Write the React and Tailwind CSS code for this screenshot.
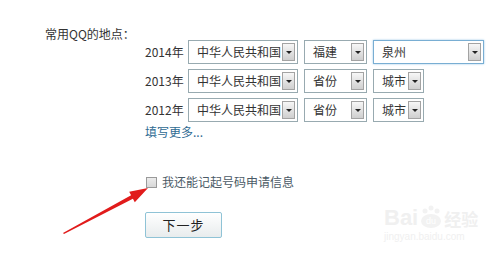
import React from 'react';

const font = { fontFamily: '"Noto Sans CJK SC", "Noto Sans", sans-serif' };

const Arrow = () => (
  <span className="absolute right-[2px] top-[2px] bottom-[2px] w-[13px] border border-[#a3a3a3] bg-gradient-to-b from-[#f7f7f7] to-[#cfcfcf] flex items-center justify-center">
    <span className="block w-0 h-0 border-l-[3px] border-r-[3px] border-t-[3px] border-l-transparent border-r-transparent border-t-[#222]" />
  </span>
);

const Select = ({ value, width, active }) => (
  <div
    className={`relative h-[24px] ${width} border ${
      active ? 'border-[#79aed3] shadow-[0_0_2px_#9cc8e6]' : 'border-[#98aab0]'
    } bg-white flex items-center pl-[8px] text-[12px] leading-[14px] text-[#333]`}
  >
    {value}
    <Arrow />
  </div>
);

const rows = [
  { year: '2014年', province: '福建', city: '泉州', wide: true },
  { year: '2013年', province: '省份', city: '城市' },
  { year: '2012年', province: '省份', city: '城市' },
];

const App = () => {
  return (
    <div className="relative w-[500px] h-[258px] bg-white overflow-hidden" style={font}>
      <div className="pt-[27px] pl-[45px] text-[12px] leading-[13px] text-[#333]">常用QQ的地点：</div>

      <div className="ml-[145px] flex flex-col gap-[5px]">
        {rows.map((r) => (
          <div key={r.year} className="flex items-center">
            <span className="w-[43px] text-[12px] leading-[14px] text-[#333]">{r.year}</span>
            <Select value="中华人民共和国" width="w-[110px]" />
            <div className="w-[6px]" />
            <Select value={r.province} width="w-[63px]" />
            <div className="w-[6px]" />
            <Select value={r.city} width={r.wide ? 'w-[111px]' : 'w-[51px]'} active={r.wide} />
          </div>
        ))}
      </div>

      <div className="ml-[145px] mt-[3px] text-[12px] leading-[14px] text-[#2f6b93]">填写更多...</div>

      <label className="ml-[146px] mt-[36px] flex items-center gap-[5px] w-fit">
        <span className="w-[11px] h-[11px] border border-[#9a9a9a] bg-gradient-to-b from-[#ececec] to-[#d8d8d8]" />
        <span className="text-[12px] leading-[14px] text-[#4b5a66]">我还能记起号码申请信息</span>
      </label>

      <button className="ml-[145px] mt-[23px] w-[77px] h-[26px] rounded-[2px] border border-[#8fc3d6] bg-gradient-to-b from-white to-[#e8eced] text-[13px] text-[#222] flex items-center justify-center tracking-[1px]">
        下一步
      </button>

      <svg className="absolute left-0 top-0 pointer-events-none" width="500" height="258">
        <polygon
          points="63,233 131.1,195.2 129.2,191.7 148,188 134.8,202.3 132.9,198.8 64,234"
          fill="#e11b1b"
        />
      </svg>

      <div className="absolute left-[384px] top-[204px] text-[#f0f0f0] pointer-events-none">
        <div className="flex items-end gap-[1px]">
          <span className="text-[22px] leading-[24px] font-bold" style={{ fontFamily: '"Liberation Sans", sans-serif' }}>Bai</span>
          <svg width="24" height="26" viewBox="0 0 24 26">
            <circle cx="6" cy="7" r="2.5" fill="#f2f2f2" />
            <circle cx="12" cy="4" r="2.5" fill="#f2f2f2" />
            <circle cx="18" cy="7" r="2.5" fill="#f2f2f2" />
            <ellipse cx="12" cy="17" rx="10" ry="7" fill="#f2f2f2" />
            <text x="12" y="20" fontSize="9" textAnchor="middle" fill="#fff" fontFamily="Liberation Sans">du</text>
          </svg>
          <span className="text-[17px] leading-[22px] font-bold">经验</span>
        </div>
        <div className="text-[10px] leading-[12px] mt-[1px]" style={{ fontFamily: '"Liberation Sans", sans-serif' }}>jingyan.baidu.com</div>
      </div>
    </div>
  );
};

export default App;
